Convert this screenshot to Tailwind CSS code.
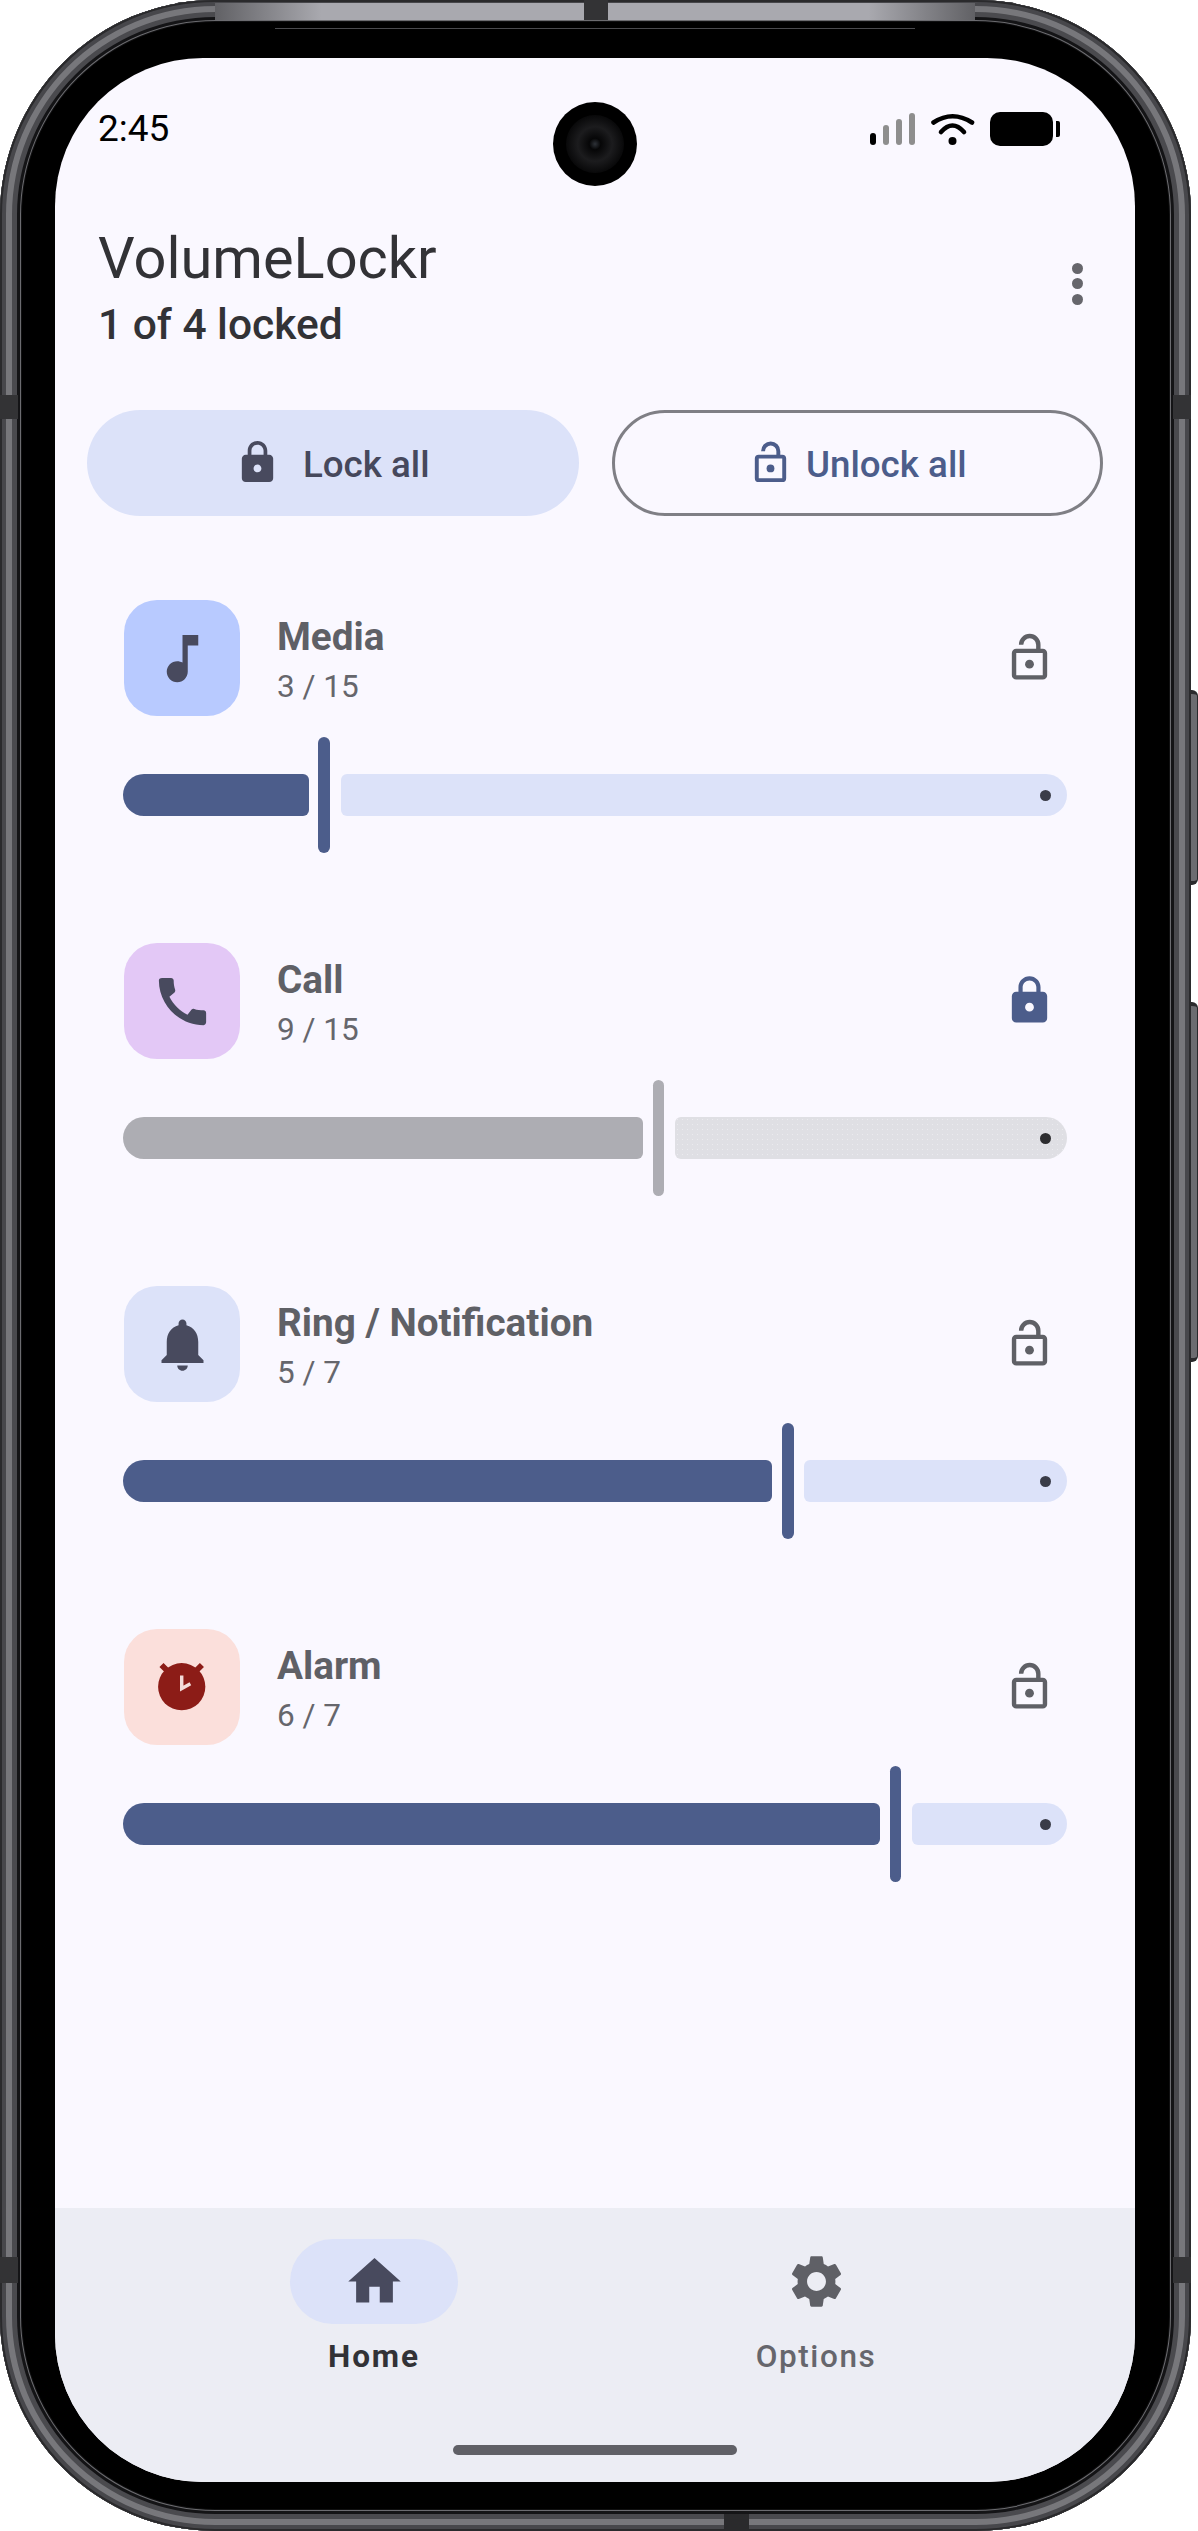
<!DOCTYPE html>
<html lang="en">
<head>
    <meta charset="UTF-8">
    <meta name="viewport" content="width=device-width, initial-scale=1.0">
    <title>VolumeLockr</title>
    <script src="https://cdn.jsdelivr.net/npm/@tailwindcss/browser@4"></script>
</head>
<body class="bg-white font-[Roboto,sans-serif] w-[1198px] h-[2531px] overflow-hidden">
    <!-- Phone frame -->
    <div class="relative w-[1191px] h-[2531px] rounded-[215px] bg-black pl-[55px] pt-[58px] shadow-[inset_0_0_0_2px_#2a2a2c,inset_0_0_0_6px_#47474b,inset_0_0_0_12px_#77777b,inset_0_0_0_17px_#4a4a4e,inset_0_0_0_20px_#141416,inset_0_0_0_21px_#6c6c70,inset_0_0_0_22px_#101011]">
        <!-- Frame details -->
        <div class="absolute left-[215px] top-[3px] w-[760px] h-[17px] bg-[linear-gradient(90deg,#616165,#a9a9af_14%,#a9a9af_86%,#616165)]"></div>
        <div class="absolute left-[275px] top-[22px] w-[640px] h-[7px] bg-black border-b border-[#4a4a4e]"></div>
        <div class="absolute left-[584px] top-0 w-[24px] h-[20px] bg-[#333335]"></div>
        <div class="absolute left-[724px] bottom-0 w-[25px] h-[17px] bg-[#2a2a2c]"></div>
        <div class="absolute left-0 top-[395px] w-[18px] h-[24px] bg-[#333335]"></div>
        <div class="absolute left-0 top-[2257px] w-[18px] h-[26px] bg-[#333335]"></div>
        <div class="absolute right-0 top-[395px] w-[18px] h-[24px] bg-[#333335]"></div>
        <div class="absolute right-0 top-[2257px] w-[18px] h-[26px] bg-[#333335]"></div>
        <div class="absolute left-[1191px] top-[690px] w-[7px] h-[195px] rounded-r-[6px] bg-[#6c6c70] border-y-4 border-r border-[#2a2a2c]"></div>
        <div class="absolute left-[1191px] top-[1002px] w-[7px] h-[360px] rounded-r-[6px] bg-[#6c6c70] border-y-4 border-r border-[#2a2a2c]"></div>

        <!-- Screen -->
        <div class="relative w-[1080px] h-[2424px] rounded-[148px] overflow-hidden bg-[#faf8ff] flex flex-col">
            <!-- Camera -->
            <div class="absolute left-[498px] top-[44px] w-[84px] h-[84px] rounded-full bg-black flex items-center justify-center">
                <div class="w-[58px] h-[58px] rounded-full bg-[radial-gradient(circle,#2e3238_0,#060607_14%,#1c1c1e_42%,#0a0a0b_68%,#000_100%)]"></div>
            </div>

            <!-- Status bar -->
            <div class="h-[132px] pt-[51px] pl-[43px] pr-[75px] flex justify-between items-start">
                <span class="text-[37px] leading-[40px] text-black">2:45</span>
                <div class="flex items-start mt-[3px]">
                    <div class="flex items-end gap-[7px] h-[32px] mt-px">
                        <div class="w-[6px] h-[12px] rounded-full bg-black"></div>
                        <div class="w-[6px] h-[20px] rounded-full bg-[#8e8e8e]"></div>
                        <div class="w-[6px] h-[26px] rounded-full bg-[#8e8e8e]"></div>
                        <div class="w-[6px] h-[32px] rounded-full bg-[#8e8e8e]"></div>
                    </div>
                    <svg class="ml-[16px] mt-px" width="44" height="32" viewBox="0 0 44 32" fill="none" stroke="#000" stroke-width="4.6" stroke-linecap="round">
                        <path d="M2.5 9.5Q21.5 -3 41 9.5"/>
                        <path d="M10 19Q21.5 6 33 19"/>
                        <circle cx="21.5" cy="28" r="4" fill="#000" stroke="none"/>
                    </svg>
                    <div class="ml-[15px] w-[63px] h-[34px] rounded-[10px] bg-black"></div>
                    <div class="ml-[3px] mt-[9px] w-[4px] h-[16px] rounded-r-[2px] bg-black"></div>
                </div>
            </div>

            <!-- Header -->
            <div class="mt-[34px] pl-[43px] pr-[52px] flex justify-between items-center">
                <div>
                    <h1 class="text-[57.75px] leading-[68px] text-[#323236]">VolumeLockr</h1>
                    <p class="mt-[8px] text-[42.5px] leading-[50px] font-medium text-[#323236]">1 of 4 locked</p>
                </div>
                <div class="flex flex-col gap-[4.5px] mb-[7px]">
                    <div class="w-[11px] h-[11px] rounded-full bg-[#66666c]"></div>
                    <div class="w-[11px] h-[11px] rounded-full bg-[#66666c]"></div>
                    <div class="w-[11px] h-[11px] rounded-full bg-[#66666c]"></div>
                </div>
            </div>

            <!-- Lock buttons -->
            <div class="mt-[60px] px-[32px] grid grid-cols-2 gap-[33px]">
                <button class="h-[106px] rounded-full bg-[#dce2f9] flex items-center justify-center text-[36.75px] font-medium text-[#46485c]">
                    <svg class="mr-[22px] -ml-[2px] mb-[2px]" width="47" height="47" viewBox="0 0 24 24" fill="#484a5e"><path d="M18 8h-1V6c0-2.76-2.24-5-5-5S7 3.24 7 6v2H6c-1.1 0-2 .9-2 2v10c0 1.1.9 2 2 2h12c1.1 0 2-.9 2-2V10c0-1.1-.9-2-2-2zm-6 9c-1.1 0-2-.9-2-2s.9-2 2-2 2 .9 2 2-.9 2-2 2zm3.1-9H8.9V6c0-1.71 1.39-3.1 3.1-3.1 1.71 0 3.1 1.39 3.1 3.1v2z"/></svg>
                    <span class="pt-[3px]">Lock all</span>
                </button>
                <button class="h-[106px] rounded-full border-[3px] border-[#7f7f85] flex items-center justify-center text-[36.75px] font-medium text-[#4c5d8b]">
                    <svg class="mr-[12px] -ml-[1px] mb-[2px]" width="47" height="47" viewBox="0 0 24 24" fill="none" stroke="#4c5d8b" stroke-width="2"><rect x="5" y="9" width="14" height="12" rx="1"/><path d="M8.2 6.2a3.9 3.9 0 0 1 7.8 0V9"/><circle cx="12" cy="15" r="2" fill="#4c5d8b" stroke="none"/></svg>
                    <span class="pt-[3px]">Unlock all</span>
                </button>
            </div>

            <!-- Volume rows -->
            <div class="mt-[84px] mx-[68px] flex flex-col gap-[90px]">
                <!-- Media -->
                <div>
                    <div class="flex items-center pl-px pr-[11px]">
                        <div class="w-[116px] h-[116px] rounded-[33px] bg-[#b8caff] flex items-center justify-center">
                            <svg width="63" height="63" viewBox="0 0 24 24" fill="#484a5e"><path d="M12 3v10.55c-.59-.34-1.27-.55-2-.55-2.21 0-4 1.79-4 4s1.79 4 4 4 4-1.79 4-4V7h4V3h-6z"/></svg>
                        </div>
                        <div class="ml-[37px] self-start pt-[13px] flex-1">
                            <p class="text-[38.7px] leading-[48px] font-bold text-[#5f6066]">Media</p>
                            <p class="mt-[4px] text-[31.5px] leading-[44px] text-[#66666c]">3 / 15</p>
                        </div>
                        <svg class="mb-[2px]" width="53" height="53" viewBox="0 0 24 24" fill="none" stroke="#5f6066" stroke-width="2"><rect x="5" y="9" width="14" height="12" rx="1"/><path d="M8.2 6.2a3.9 3.9 0 0 1 7.8 0V9"/><circle cx="12" cy="15" r="2" fill="#5f6066" stroke="none"/></svg>
                    </div>
                    <div class="mt-[21px] h-[116px] flex items-center">
                        <div class="w-[186px] h-[42px] rounded-l-[21px] rounded-r-[6px] bg-[#4c5d8b]"></div>
                        <div class="ml-[9px] w-[12px] h-[116px] rounded-full bg-[#4c5d8b]"></div>
                        <div class="ml-[11px] flex-1 h-[42px] rounded-l-[6px] rounded-r-[21px] bg-[#dce2f9] flex items-center justify-end pr-[16px]"><div class="w-[11px] h-[11px] rounded-full bg-[#3a3c48]"></div></div>
                    </div>
                </div>
                <!-- Call -->
                <div>
                    <div class="flex items-center pl-px pr-[11px]">
                        <div class="w-[116px] h-[116px] rounded-[33px] bg-[#e3c8f6] flex items-center justify-center">
                            <svg width="63" height="63" viewBox="0 0 24 24" fill="#484a5e"><path d="M20.01 15.38c-1.23 0-2.42-.2-3.53-.56-.35-.12-.74-.03-1.01.24l-1.57 1.97c-2.83-1.35-5.48-3.9-6.89-6.83l1.95-1.66c.27-.28.35-.67.24-1.02-.37-1.11-.56-2.3-.56-3.53 0-.54-.45-.99-.99-.99H4.19C3.65 3 3 3.24 3 3.99 3 13.28 10.73 21 20.01 21c.71 0 .99-.63.99-1.18v-3.45c0-.54-.45-.99-.99-.99z"/></svg>
                        </div>
                        <div class="ml-[37px] self-start pt-[13px] flex-1">
                            <p class="text-[38.7px] leading-[48px] font-bold text-[#5f6066]">Call</p>
                            <p class="mt-[4px] text-[31.5px] leading-[44px] text-[#66666c]">9 / 15</p>
                        </div>
                        <svg class="mb-[2px]" width="53" height="53" viewBox="0 0 24 24" fill="#4c5d8b"><path d="M18 8h-1V6c0-2.76-2.24-5-5-5S7 3.24 7 6v2H6c-1.1 0-2 .9-2 2v10c0 1.1.9 2 2 2h12c1.1 0 2-.9 2-2V10c0-1.1-.9-2-2-2zm-6 9c-1.1 0-2-.9-2-2s.9-2 2-2 2 .9 2 2-.9 2-2 2zm3.1-9H8.9V6c0-1.71 1.39-3.1 3.1-3.1 1.71 0 3.1 1.39 3.1 3.1v2z"/></svg>
                    </div>
                    <div class="mt-[21px] h-[116px] flex items-center">
                        <div class="w-[520px] h-[42px] rounded-l-[21px] rounded-r-[6px] bg-[#adadb3]"></div>
                        <div class="ml-[10px] w-[11px] h-[116px] rounded-full bg-[#adadb3]"></div>
                        <div class="ml-[11px] flex-1 h-[42px] rounded-l-[6px] rounded-r-[21px] bg-[#dfdfe4] bg-[radial-gradient(circle,#ebebef_0.7px,transparent_0.9px)] bg-[length:5px_5px] flex items-center justify-end pr-[16px]"><div class="w-[11px] h-[11px] rounded-full bg-[#2d2d30]"></div></div>
                    </div>
                </div>
                <!-- Ring -->
                <div>
                    <div class="flex items-center pl-px pr-[11px]">
                        <div class="w-[116px] h-[116px] rounded-[33px] bg-[#dce2f9] flex items-center justify-center">
                            <svg width="63" height="63" viewBox="0 0 24 24" fill="#484a5e"><path d="M12 22c1.1 0 2-.9 2-2h-4c0 1.1.89 2 2 2zm6-6v-5c0-3.07-1.64-5.64-4.5-6.32V4c0-.83-.67-1.5-1.5-1.5s-1.5.67-1.5 1.5v.68C7.63 5.36 6 7.92 6 11v5l-2 2v1h16v-1l-2-2z"/></svg>
                        </div>
                        <div class="ml-[37px] self-start pt-[13px] flex-1">
                            <p class="text-[38.7px] leading-[48px] font-bold text-[#5f6066]">Ring / Notification</p>
                            <p class="mt-[4px] text-[31.5px] leading-[44px] text-[#66666c]">5 / 7</p>
                        </div>
                        <svg class="mb-[2px]" width="53" height="53" viewBox="0 0 24 24" fill="none" stroke="#5f6066" stroke-width="2"><rect x="5" y="9" width="14" height="12" rx="1"/><path d="M8.2 6.2a3.9 3.9 0 0 1 7.8 0V9"/><circle cx="12" cy="15" r="2" fill="#5f6066" stroke="none"/></svg>
                    </div>
                    <div class="mt-[21px] h-[116px] flex items-center">
                        <div class="w-[649px] h-[42px] rounded-l-[21px] rounded-r-[6px] bg-[#4c5d8b]"></div>
                        <div class="ml-[10px] w-[12px] h-[116px] rounded-full bg-[#4c5d8b]"></div>
                        <div class="ml-[10px] flex-1 h-[42px] rounded-l-[6px] rounded-r-[21px] bg-[#dce2f9] flex items-center justify-end pr-[16px]"><div class="w-[11px] h-[11px] rounded-full bg-[#3a3c48]"></div></div>
                    </div>
                </div>
                <!-- Alarm -->
                <div>
                    <div class="flex items-center pl-px pr-[11px]">
                        <div class="w-[116px] h-[116px] rounded-[33px] bg-[#fbdfdb] flex items-center justify-center">
                            <svg width="63" height="63" viewBox="0 0 24 24">
                                <path d="M4 3.4L6.4 5.8M19.4 3.4L17 5.8" stroke="#8c1c17" stroke-width="2.2"/>
                                <circle cx="11.7" cy="11.7" r="9" fill="#8c1c17"/>
                                <path d="M11.7 7.4V12.4L15 10.6" fill="none" stroke="#f3dcda" stroke-width="1.3"/>
                            </svg>
                        </div>
                        <div class="ml-[37px] self-start pt-[13px] flex-1">
                            <p class="text-[38.7px] leading-[48px] font-bold text-[#5f6066]">Alarm</p>
                            <p class="mt-[4px] text-[31.5px] leading-[44px] text-[#66666c]">6 / 7</p>
                        </div>
                        <svg class="mb-[2px]" width="53" height="53" viewBox="0 0 24 24" fill="none" stroke="#5f6066" stroke-width="2"><rect x="5" y="9" width="14" height="12" rx="1"/><path d="M8.2 6.2a3.9 3.9 0 0 1 7.8 0V9"/><circle cx="12" cy="15" r="2" fill="#5f6066" stroke="none"/></svg>
                    </div>
                    <div class="mt-[21px] h-[116px] flex items-center">
                        <div class="w-[757px] h-[42px] rounded-l-[21px] rounded-r-[6px] bg-[#4c5d8b]"></div>
                        <div class="ml-[10px] w-[11px] h-[116px] rounded-full bg-[#4c5d8b]"></div>
                        <div class="ml-[11px] flex-1 h-[42px] rounded-l-[6px] rounded-r-[21px] bg-[#dce2f9] flex items-center justify-end pr-[16px]"><div class="w-[11px] h-[11px] rounded-full bg-[#3a3c48]"></div></div>
                    </div>
                </div>
            </div>

            <!-- Bottom navigation -->
            <div class="mt-auto h-[274px] bg-[#ecedf4] pt-[31px] flex flex-col">
                <div class="pl-[98px] pr-[98px] grid grid-cols-2">
                    <div class="flex flex-col items-center">
                        <div class="w-[168px] h-[85px] rounded-full bg-[#dce2f9] flex items-center justify-center">
                            <svg width="63" height="63" viewBox="0 0 24 24" fill="#484a5e"><path d="M10 20v-6h4v6h5v-8h3L12 3 2 12h3v8z"/></svg>
                        </div>
                        <span class="mt-[11px] text-[31.5px] leading-[44px] font-bold tracking-[1.9px] text-[#323236]">Home</span>
                    </div>
                    <div class="flex flex-col items-center">
                        <div class="w-[168px] h-[85px] flex items-center justify-center">
                            <svg width="63" height="63" viewBox="0 0 24 24" fill="#5f6066"><path d="M19.14 12.94c.04-.3.06-.61.06-.94 0-.32-.02-.64-.07-.94l2.03-1.58c.18-.14.23-.41.12-.61l-1.92-3.32c-.12-.22-.37-.29-.59-.22l-2.39.96c-.5-.38-1.03-.7-1.62-.94l-.36-2.54c-.04-.24-.24-.41-.48-.41h-3.84c-.24 0-.43.17-.47.41l-.36 2.54c-.59.24-1.13.57-1.62.94l-2.39-.96c-.22-.08-.47 0-.59.22L2.74 8.87c-.12.21-.08.47.12.61l2.03 1.58c-.05.3-.09.63-.09.94s.02.64.07.94l-2.03 1.58c-.18.14-.23.41-.12.61l1.92 3.32c.12.22.37.29.59.22l2.39-.96c.5.38 1.03.7 1.62.94l.36 2.54c.05.24.24.41.48.41h3.84c.24 0 .44-.17.47-.41l.36-2.54c.59-.24 1.13-.56 1.62-.94l2.39.96c.22.08.47 0 .59-.22l1.92-3.32c.12-.22.07-.47-.12-.61l-2.01-1.58zM12 15.6c-1.98 0-3.6-1.62-3.6-3.6s1.62-3.6 3.6-3.6 3.6 1.62 3.6 3.6-1.62 3.6-3.6 3.6z"/></svg>
                        </div>
                        <span class="mt-[11px] text-[31.5px] leading-[44px] font-medium tracking-[1.6px] text-[#66666c]">Options</span>
                    </div>
                </div>
                <div class="mt-[66px] mx-auto w-[284px] h-[10px] rounded-full bg-[#606066]"></div>
            </div>
        </div>
    </div>
</body>
</html>
